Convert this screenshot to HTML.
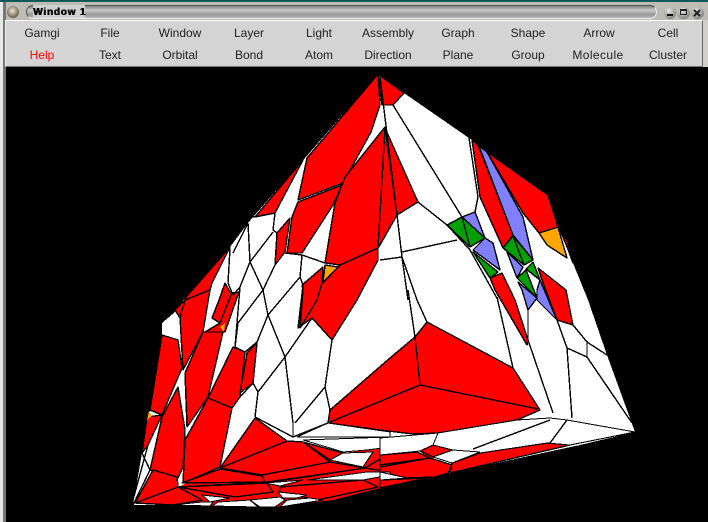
<!DOCTYPE html>
<html><head><meta charset="utf-8"><style>
html,body{margin:0;padding:0;background:#000}
#w{position:relative;width:708px;height:522px;overflow:hidden;background:#000;font-family:"Liberation Sans",sans-serif}
.a{position:absolute}
.m{position:absolute;font-size:12px;line-height:14px;color:#222;transform:translateX(-50%);white-space:nowrap}
svg{position:absolute;left:0;top:0}
</style></head><body><div id="w">
<div class="a" style="left:0;top:0;width:708px;height:20px;background:#bdbdb6"></div>
<div class="a" style="left:0;top:0;width:708px;height:2px;background:#0c5a58"></div>
<div class="a" style="left:0;top:2px;width:6px;height:520px;background:linear-gradient(90deg,#e8e8e8 0,#e8e8e8 3px,#777 3px)"></div>
<div class="a" style="left:7px;top:6px;width:12px;height:12px;border-radius:50%;background:radial-gradient(circle at 45% 40%,#f0e6d4,#8a7c68 55%,#2e2e28)"></div>
<div class="a" style="left:26px;top:5px;width:631px;height:14px;border-radius:7px;border:1px solid #555;border-right-color:#eee;border-bottom-color:#eee;box-sizing:border-box;background:linear-gradient(180deg,#808080,#c8c8c8 35%,#999 70%,#b8b8b8)"></div>
<div class="a" style="left:33px;top:5px;width:52px;height:13px;background:#d0d0d0"></div>
<div class="a" style="left:33px;top:5px;font:bold 10px/15px 'Liberation Sans',sans-serif;color:#000;text-shadow:.6px 0 0 #000;letter-spacing:.8px;white-space:nowrap">Window 1</div>
<div class="a" style="left:664px;top:7px;width:12px;height:12px;border-radius:50%;background:radial-gradient(circle at 40% 30%,#e4e4e4,#999 60%,#555)"></div>
<div class="a" style="left:667px;top:14px;width:6px;height:2px;background:#111"></div>
<div class="a" style="left:677px;top:7px;width:13px;height:12px;border-radius:50%;background:radial-gradient(circle at 40% 30%,#e4e4e4,#999 60%,#555)"></div>
<div class="a" style="left:680px;top:9px;width:7px;height:6px;border:1px solid #222;border-top-width:2px;box-sizing:border-box"></div>
<div class="a" style="left:691px;top:7px;width:13px;height:12px;border-radius:50%;background:radial-gradient(circle at 40% 30%,#e4e4e4,#999 60%,#555)"></div>
<svg width="708" height="30" style="z-index:2"><path d="M694 10l6 6M700 10l-6 6" stroke="#222" stroke-width="2"/></svg>
<div class="a" style="left:5px;top:20px;width:698px;height:47px;background:#d4d4d4;border-top:1px solid #fff;border-left:1px solid #eee;border-right:1px solid #666;border-bottom:1px solid #777;box-sizing:border-box"></div>
<div class="a" style="left:703px;top:20px;width:5px;height:47px;background:#d0d0c8"></div>

<div class="m" style="left:42px;top:26px">Gamgi</div><div class="m" style="left:110px;top:26px">File</div><div class="m" style="left:180px;top:26px">Window</div><div class="m" style="left:249px;top:26px">Layer</div><div class="m" style="left:319px;top:26px">Light</div><div class="m" style="left:388px;top:26px">Assembly</div><div class="m" style="left:458px;top:26px">Graph</div><div class="m" style="left:528px;top:26px">Shape</div><div class="m" style="left:599px;top:26px">Arrow</div><div class="m" style="left:668px;top:26px">Cell</div>
<div class="m" style="left:42px;top:48px;color:#f00">Help</div><div class="m" style="left:110px;top:48px">Text</div><div class="m" style="left:180px;top:48px">Orbital</div><div class="m" style="left:249px;top:48px">Bond</div><div class="m" style="left:319px;top:48px">Atom</div><div class="m" style="left:388px;top:48px">Direction</div><div class="m" style="left:458px;top:48px">Plane</div><div class="m" style="left:528px;top:48px">Group</div><div class="m" style="left:598px;top:48px;letter-spacing:.4px">Molecule</div><div class="m" style="left:668px;top:48px">Cluster</div>

<svg width="708" height="522" viewBox="0 0 708 522" shape-rendering="crispEdges" style="top:0">
<polygon fill="#fff" points="378,74 404,93 469,138 472,140 487,152 548,195 558,227 573,263 588,300 607,355 635,432 580,445 450,473 380,488 333,500 273,507 173,505 133,505 142,453 150,410 162,335 162,323 175,312 186,297 230,247 248,223 253,217 305,158"/>
<polygon fill="#f00" points="135,503 178,487 220,468 287,441 343,453 390,447 430,455 450,473 380,488 333,500 273,507 173,505"/>
<g fill="#f00" stroke="#000" stroke-width="1.4" stroke-linejoin="round">
<polygon points="378,74 380,105 371,132 343,183 298,200 307,158"/>
<polygon points="378,74 404,93 393,105 382,105"/>
<polygon points="385,127 345,177 335,203 325,263 340,265 378,248 397,215 418,202 385,128"/>
<polygon points="397,215 380,245 378,248 385,128"/>
<polygon points="255,217 275,213 303,160"/>
<polygon points="298,202 342,185 333,205 302,253 287,253 292,217"/>
<polygon points="277,233 290,218 285,252 275,265"/>
<polygon points="340,265 378,248 378,260 357,300 332,340 312,318 298,328 303,290 323,283"/>
<polygon points="302,285 323,267 322,283 317,300 300,328 303,290"/>
<polygon points="186,297 230,247 212,283 210,290 185,300"/>
<polygon points="180,317 185,300 210,290 203,332 183,370"/>
<polygon points="219,300 225,283 233,297 226,325 220,323 212,318"/>
<polygon points="205,332 220,323 232,293 239,292 225,332"/>
<polygon points="175,310 185,300 180,318"/>
<polygon points="150,410 162,335 178,340 182,368 162,415"/>
<polygon points="142,453 147,417 162,415 148,445"/>
<polygon points="150,470 162,417 178,387 185,430 183,467 178,478"/>
<polygon points="183,483 185,440 208,398 232,408 220,467"/>
<polygon points="185,373 203,332 223,332 208,397 187,427"/>
<polygon points="208,398 233,347 245,352 240,397 232,408"/>
<polygon points="240,393 247,353 257,343 253,383"/>
<polygon points="427,322 513,368 540,410 517,420 438,433 413,434 380,430 328,423 330,410 390,358 415,337"/>
<polygon points="287,441 255,418 220,468"/>
<polygon points="220,468 287,441 303,442 330,462 262,475"/>
<polygon points="303,442 343,453 330,460"/>
<polygon points="182,483 220,469 262,476 267,482"/>
<polygon points="178,487 267,483 273,492 235,497"/>
<polygon points="262,475 330,462 365,468 265,483"/>
<polygon points="365,468 390,453 390,472"/>
<polygon points="280,487 363,480 378,487 317,500 280,492"/>
<polygon points="135,503 178,487 202,500 173,505"/>
<polygon points="135,503 153,470 177,477 178,487"/>
<polygon points="380,455 417,452 430,458 380,465"/>
<polygon points="420,451 433,445 453,450 433,457"/>
<polygon points="380,467 430,458 452,465 448,473 435,477 407,478 380,472"/>
<polygon points="452,463 480,453 547,443 570,445 450,473"/>
<polygon points="380,488 380,480 427,478"/>
<polygon points="472,140 478,145 513,235 503,248 480,197"/>
<polygon points="487,152 548,195 558,227 539,233 523,213"/>
<polygon points="562,233 573,263 567,240"/>
<polygon points="538,268 566,290 573,325 557,320 543,283"/>
<polygon points="490,278 502,273 515,300 528,340 527,345 495,290"/>
</g>
<g fill="#fff" stroke="#000" stroke-width="1">
<polygon points="330,460 343,453 373,452 363,467"/>
<polygon points="303,440 390,437 390,447 367,450 343,452 320,445"/>
<polygon points="328,423 390,432 390,437 297,437"/>
<polygon points="307,480 367,472 390,472 390,475 363,480"/>
<polygon points="265,483 303,480 280,486"/>
<polygon points="278,492 307,495 297,498 283,498"/>
<polygon points="202,495 230,498 210,502"/>
<polygon points="173,505 202,502 213,502 210,506"/>
<polygon points="212,506 218,502 250,500 258,507"/>
<polygon points="250,500 280,497 285,500 275,507 260,507"/>
<polygon points="287,500 310,498 323,500 280,507"/>
<polygon points="380,438 438,433 433,445 420,451 380,455"/>
<polygon points="438,433 517,420 550,418 567,420 635,432 570,445 547,443 480,453 453,450 433,445"/>
<polygon points="433,457 453,450 480,452 452,463"/>
<polygon points="380,472 407,478 380,480"/>
</g>
<g stroke="#000" stroke-width="1.4" stroke-linejoin="round">
<polygon fill="#ffa500" points="539,233 558,227 567,258 547,245"/>
<polygon fill="#ffa500" points="325,265 338,267 323,282"/>
<polygon fill="#ffa500" points="220,327 225,323 224,332" stroke="none"/>
<polygon fill="#ffa500" points="149,411 152,416 147,420" stroke="none"/>
<polygon fill="#8080ff" points="479,146 487,152 523,217 533,260 513,235"/>
<polygon fill="#8080ff" points="462,217 475,212 485,238"/>
<polygon fill="#8080ff" points="485,238 493,243 500,270 473,250"/>
<polygon fill="#8080ff" points="507,252 523,267 517,278"/>
<polygon fill="#8080ff" points="540,280 557,320 537,300 537,290"/>
<polygon fill="#8080ff" points="518,282 537,298 528,310 522,290"/>
<polygon fill="#00a000" points="447,225 462,217 470,247"/>
<polygon fill="#00a000" points="462,217 485,238 470,247"/>
<polygon fill="#00a000" points="473,252 498,272 490,278"/>
<polygon fill="#00a000" points="503,248 513,236 524,265"/>
<polygon fill="#00a000" points="513,236 533,260 524,265"/>
<polygon fill="#00a000" points="526,269 533,262 540,280"/>
<polygon fill="#00a000" points="517,278 526,270 537,298"/>
</g>
<g fill="none" stroke="#000" stroke-width="1.4" stroke-linejoin="round">
<path d="M393 105L462 217M469 138L478 197L475 212M380 77L397 215L402 257L417 300M418 202L397 215M418 202L447 225L470 250L498 300M402 252L457 240M380 260L402 257L408 300M408 290L415 337M417 300L427 322"/>
<path d="M497 297L513 368M528 310L528 340L553 413M557 320L567 348L572 418M567 348L587 357L632 423M587 342L587 357M573 325L587 342L607 355"/>
<path d="M420 385L415 337M420 385L538 409M420 385L330 422"/>
<path d="M427 322L415 337M293 437L328 423"/>
<path d="M473 449L550 420M550 443L567 420"/>
<path d="M248 223L250 262L263 290L268 315L285 357L293 423L293 437M253 217L275 213L273 230L277 233L275 265M250 262L240 287L235 347M250 262L273 232M230 248L228 283L233 295L240 287M248 223L233 253M285 253L302 255L300 277L303 285L298 328M302 255L325 263"/>
<path d="M268 315L257 342L245 352L235 347L238 323L263 290M285 357L312 318M285 357L258 392L253 383L257 342M258 392L255 417M240 397L253 383M232 408L220 467M255 417L293 437M332 340L325 387L330 410M325 387L295 423M268 315L300 277M275 265L263 290"/>
<path d="M178 487L267 482L365 468M148 445L133 500M150 470L133 505M142 453L150 470M178 340L162 335"/>
</g>
</svg>
</div></body></html>
